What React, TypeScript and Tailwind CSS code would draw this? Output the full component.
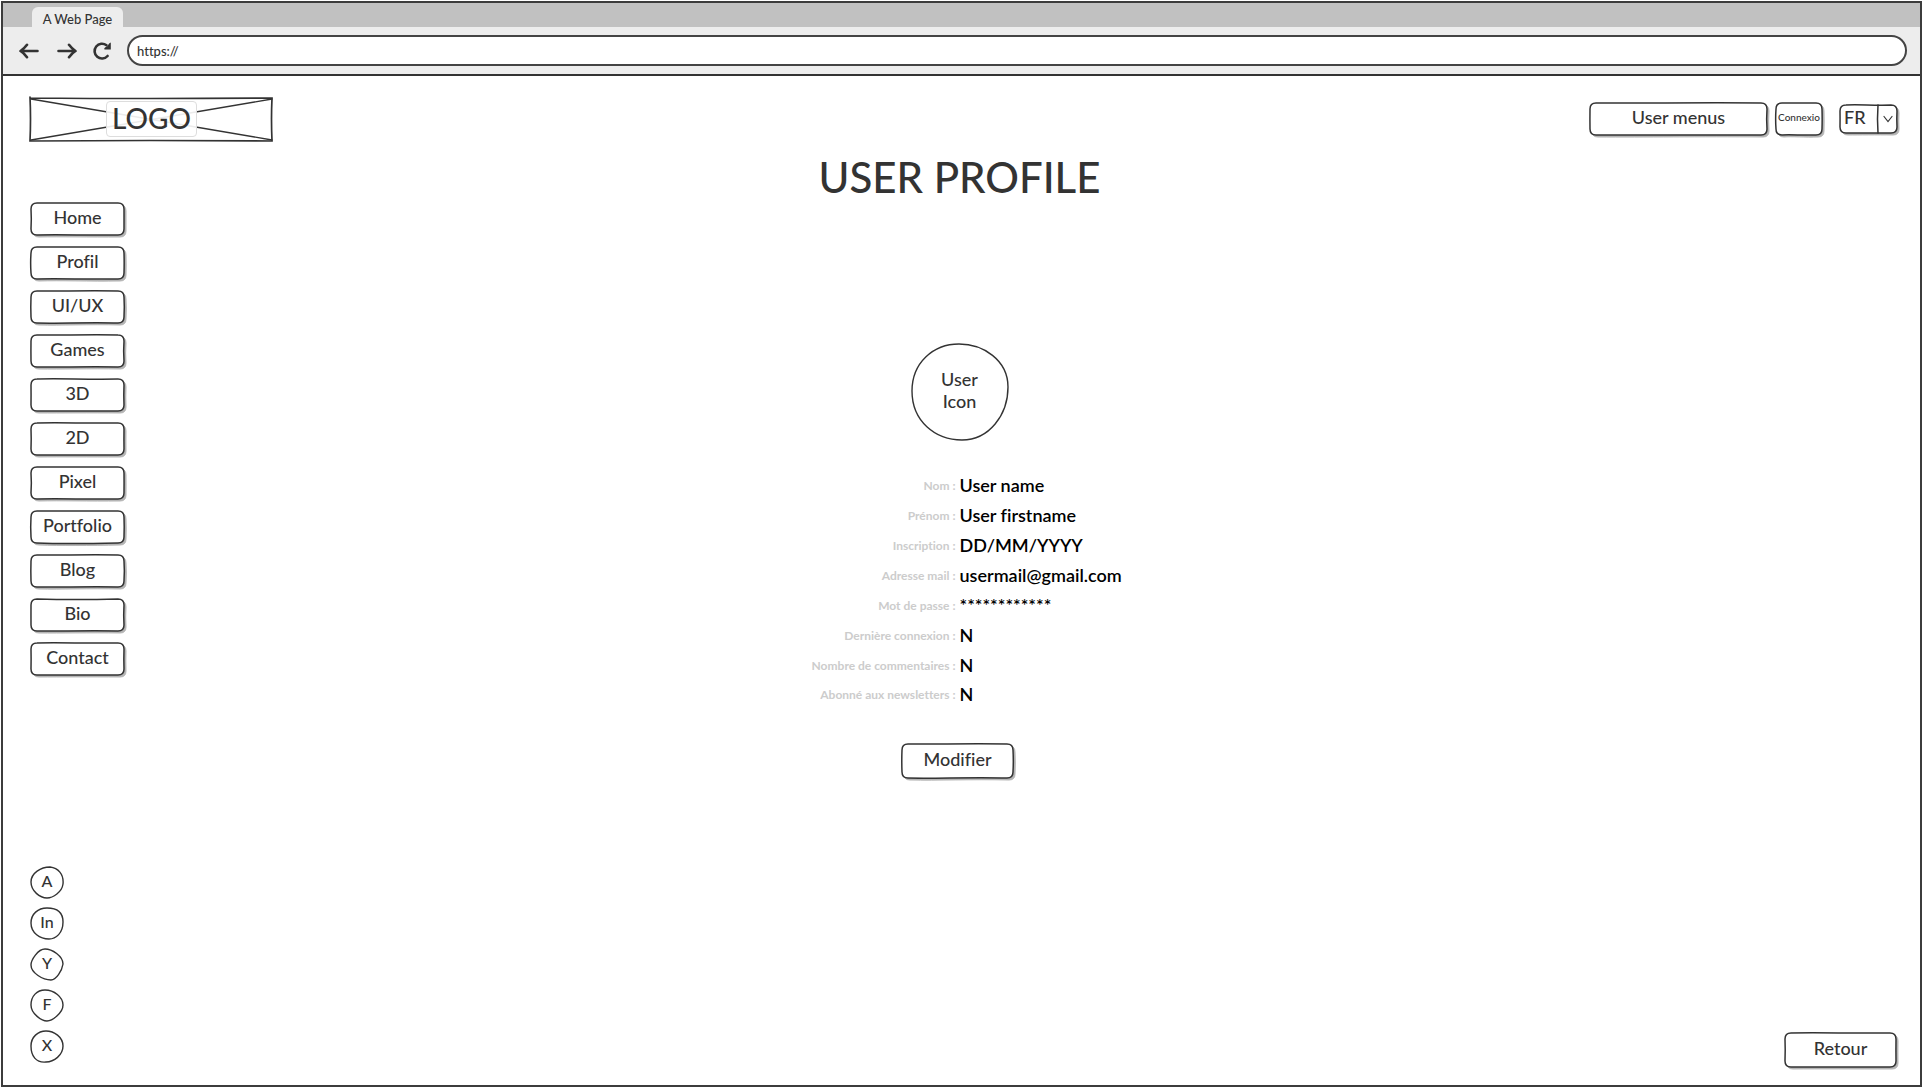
import type { ReactNode } from 'react';

const INK = '#333333';

/** Slightly wobbly rounded rectangle, as if drawn with a pen. */
function sketchRect(w: number, h: number, r: number, seed: number): string {
  const n = (i: number) => (((seed * 37 + i * 53) % 17) / 17 - 0.5) * 1.6;
  return [
    `M${r} 1`,
    `C${w * 0.3} ${1 + n(1)} ${w * 0.6} ${1 - n(2)} ${w - r} 1`,
    `Q${w - 1} 1 ${w - 1} ${r}`,
    `Q${w - 1 + n(3)} ${h / 2} ${w - 1} ${h - r}`,
    `Q${w - 1} ${h - 1} ${w - r} ${h - 1}`,
    `C${w * 0.6} ${h - 1 + n(4)} ${w * 0.3} ${h - 1 - n(5)} ${r} ${h - 1}`,
    `Q1 ${h - 1} 1 ${h - r}`,
    `Q${1 + n(6)} ${h / 2} 1 ${r}`,
    `Q1 1 ${r} 1Z`,
  ].join(' ');
}

function SketchFrame({ w, h, seed }: { w: number; h: number; seed: number }) {
  const d = sketchRect(w, h, 7, seed);
  return (
    <svg
      aria-hidden="true"
      viewBox={`0 0 ${w} ${h}`}
      preserveAspectRatio="none"
      className="pointer-events-none absolute inset-0 size-full overflow-visible"
    >
      <path d={d} transform="translate(2 2)" fill="#b5b5b5" stroke="#b5b5b5" strokeWidth="1" />
      <path d={d} fill="#ffffff" stroke={INK} strokeWidth="1.5" />
    </svg>
  );
}

function SketchButton({
  w,
  h = 34,
  seed = 1,
  className,
  children,
}: {
  w: number;
  h?: number;
  seed?: number;
  className: string;
  children: ReactNode;
}) {
  return (
    <button type="button" className={`relative flex cursor-pointer items-center justify-center pb-[3px] whitespace-nowrap ${className}`}>
      <SketchFrame w={w} h={h} seed={seed} />
      <span className="relative">{children}</span>
    </button>
  );
}

const NAV = ['Home', 'Profil', 'UI/UX', 'Games', '3D', '2D', 'Pixel', 'Portfolio', 'Blog', 'Bio', 'Contact'];

const SOCIAL = [
  { label: 'A', d: 'M20 1C28 2 34 8 33 18C32 26 23 32 17 32C10 32 1 25 1 16C1 7 11 1 20 1Z' },
  { label: 'In', d: 'M17 1C27 1 33 5 33 15C33 26 26 32 19 32C10 32 1 26 1 16C1 7 8 1 17 1Z' },
  { label: 'Y', d: 'M15 1C22 1 33 8 33 16C32 23 26 32 21 32C13 32 1 25 1 17C1 12 8 1 15 1Z' },
  { label: 'F', d: 'M15 1C24 1 33 8 33 16C33 24 22 32 17 32C12 32 1 25 1 16C1 7 7 1 15 1Z' },
  { label: 'X', d: 'M16 1C24 1 33 7 33 16C33 25 24 32 16 32C6 33 1 26 1 16C1 7 8 1 16 1Z' },
];

const FIELDS = [
  ['Nom :', 'User name'],
  ['Prénom :', 'User firstname'],
  ['Inscription :', 'DD/MM/YYYY'],
  ['Adresse mail :', 'usermail@gmail.com'],
  ['Mot de passe :', '************'],
  ['Dernière connexion :', 'N'],
  ['Nombre de commentaires :', 'N'],
  ['Abonné aux newsletters :', 'N'],
];

function BrowserBar() {
  return (
    <header className="border-b-2 border-[#333333] bg-[#ededed]">
      <div className="flex h-6 items-end bg-[#c1c1c1] pl-[29px]">
        <div className="h-5 w-[91px] rounded-t-md bg-[#ededed] text-center text-[13px] leading-6 font-medium whitespace-nowrap">
          A Web Page
        </div>
      </div>
      <div className="flex h-[47px] items-center pr-[13px] pl-4">
        <button type="button" aria-label="Back" className="mr-[18px]">
          <svg width="20" height="20" viewBox="0 0 20 20" fill="none" stroke={INK} strokeWidth="2.6" strokeLinecap="round" strokeLinejoin="round">
            <path d="M18.5 10H2M8 3.8C6 6.5 4 8.5 1.5 10C4 11.5 6 13.5 8 16.2" />
          </svg>
        </button>
        <button type="button" aria-label="Forward" className="mr-[15px]">
          <svg width="20" height="20" viewBox="0 0 20 20" fill="none" stroke={INK} strokeWidth="2.6" strokeLinecap="round" strokeLinejoin="round">
            <path d="M1.5 10H18M12 3.8C14 6.5 16 8.5 18.5 10C16 11.5 14 13.5 12 16.2" />
          </svg>
        </button>
        <button type="button" aria-label="Reload" className="mr-[15px]">
          <svg width="20" height="20" viewBox="0 0 20 20" fill="none">
            <path d="M14.5 4.3A7.4 7.4 0 1 0 15.6 15" stroke={INK} strokeWidth="2.6" strokeLinecap="round" />
            <path d="M18.8 1.5V8.5H12.5C11.8 6.5 13.5 6.5 15 5.5C16.5 4.2 16.5 2 18.8 1.5Z" fill={INK} />
          </svg>
        </button>
        <input
          type="text"
          aria-label="Address"
          defaultValue="https://"
          className="h-[31px] min-w-0 flex-1 rounded-full border-2 border-[#444444] bg-white px-2 text-[13px] font-medium outline-none"
        />
      </div>
    </header>
  );
}

function Logo() {
  return (
    <a href="#" className="relative flex h-11 w-[243px] items-center justify-center">
      <svg aria-hidden="true" viewBox="0 0 244 44" preserveAspectRatio="none" className="absolute inset-0 size-full overflow-visible" fill="none" stroke={INK} strokeWidth="1.3" strokeLinecap="round">
        <path d="M0 1Q120 2 243 1Q242 22 243 44Q120 43 0 44Q1 22 0 0" strokeWidth="1.7" />
        <path d="M1 2L243 43M1 43L243 2" />
      </svg>
      <span className="relative h-9 rounded border border-[#dddddd] bg-white/90 px-[5px] text-[28px] leading-8 font-medium">LOGO</span>
    </a>
  );
}

export default function App() {
  return (
    <div className="min-h-screen bg-white p-px font-['Lato','Liberation_Sans',sans-serif] text-[#333333] [font-variant-ligatures:no-common-ligatures]">
      <div className="flex min-h-[calc(100vh-2px)] flex-col border-2 border-[#3c3c3c]">
        <BrowserBar />

        <div className="flex items-center justify-between pt-[21px] pr-[22px] pl-[27px]">
          <Logo />
          <div className="flex items-center">
            <SketchButton w={179} seed={4} className="h-[34px] w-[179px] text-[18px] font-medium">
              User menus
            </SketchButton>
            <SketchButton w={48} seed={2} className="ml-[7px] h-[34px] w-12 text-[10px] font-medium">
              Connexio
            </SketchButton>
            <div className="relative ml-4 h-[30px] w-[59px]">
              <SketchFrame w={59} h={30} seed={5} />
              <select
                aria-label="Langue"
                className="relative block size-full appearance-none bg-transparent pb-1 pl-[5px] text-[18px] font-medium outline-none"
              >
                <option>FR</option>
                <option>EN</option>
              </select>
              <svg aria-hidden="true" viewBox="0 0 20 30" className="pointer-events-none absolute inset-y-0 right-0 w-5 overflow-visible" fill="none" stroke={INK} strokeLinecap="round">
                <path d="M0 1Q-1 15 0 29" strokeWidth="1.5" />
                <path d="M6 12.5L10 17.5L14 12.5" strokeWidth="1.2" />
              </svg>
            </div>
          </div>
        </div>

        <div className="grid flex-1 grid-cols-[104px_1fr_112px] pr-[23px] pb-[17px] pl-[27px]">
          <div className="flex flex-col justify-between pt-[61px] pb-[5px]">
            <nav className="flex flex-col gap-[10px]">
              {NAV.map((label, i) => (
                <SketchButton key={label} w={95} seed={i + 1} className="h-[34px] w-[95px] text-[18px] font-medium">
                  {label}
                </SketchButton>
              ))}
            </nav>
            <div className="flex flex-col gap-2">
              {SOCIAL.map(({ label, d }) => (
                <a key={label} href="#" className="relative flex h-[33px] w-[34px] items-center justify-center pb-[3px] text-[16px] font-medium">
                  <svg aria-hidden="true" viewBox="0 0 34 33" className="absolute inset-0 size-full" fill="none" stroke={INK} strokeWidth="1.4">
                    <path d={d} />
                  </svg>
                  <span className="relative">{label}</span>
                </a>
              ))}
            </div>
          </div>

          <main className="flex flex-col items-center">
            <h1 className="mt-4 text-[42px] leading-10 font-medium">USER PROFILE</h1>
            <div className="relative mt-[146px] flex size-[98px] items-center justify-center pb-1 text-center text-[18px] leading-[22px] font-medium">
              <svg aria-hidden="true" viewBox="0 0 98 98" className="absolute inset-0 size-full" fill="none" stroke={INK} strokeWidth="1.4">
                <path d="M48 1C72 1 97 17 97 44C97 72 78 97 51 97C24 97 1 78 1 48C1 20 22 1 48 1Z" />
              </svg>
              <span className="relative">
                User
                <br />
                Icon
              </span>
            </div>
            <div className="mt-[30px] flex w-full flex-col items-center pr-1">
              <dl className="w-full">
                {FIELDS.map(([label, value]) => (
                  <div key={label} className="grid h-[30px] grid-cols-2 items-center gap-x-1 pb-px last:h-6">
                    <dt className="text-right text-[12px] font-bold text-[#cccccc]">{label}</dt>
                    <dd className="text-[18px] font-semibold text-black">{value}</dd>
                  </div>
                ))}
              </dl>
              <SketchButton w={113} h={36} seed={3} className="mt-[38px] h-9 w-[113px] text-[18px] font-medium">
                Modifier
              </SketchButton>
            </div>
          </main>

          <SketchButton w={113} h={36} seed={6} className="h-9 w-[113px] self-end justify-self-end text-[18px] font-medium">
            Retour
          </SketchButton>
        </div>
      </div>
    </div>
  );
}
